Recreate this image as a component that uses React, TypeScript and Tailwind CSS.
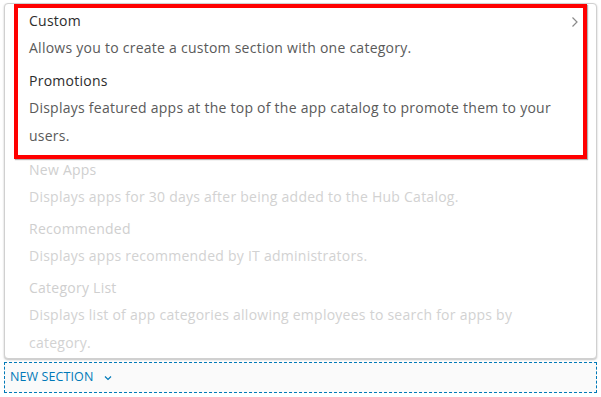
import React from 'react';

const ACTIVE = [
  { title: 'Custom', desc: 'Allows you to create a custom section with one category.', chevron: true },
  { title: 'Promotions', desc: 'Displays featured apps at the top of the app catalog to promote them to your users.' },
];

const DISABLED = [
  { title: 'New Apps', desc: 'Displays apps for 30 days after being added to the Hub Catalog.' },
  { title: 'Recommended', desc: 'Displays apps recommended by IT administrators.' },
  { title: 'Category List', desc: 'Displays list of app categories allowing employees to search for apps by category.' },
];

function Item({ title, desc, muted, chevron, last }: { title: string; desc: string; muted?: boolean; chevron?: boolean; last?: boolean }) {
  return (
    <div className={`relative ${muted || last ? 'pb-[5px]' : 'pb-[6px]'}`}>
      <div className={`h-[26px] leading-[26px] text-[14px] tracking-[0.25px] ${muted ? 'text-[#cfcfcf]' : 'text-[#2d2d2d]'}`}>{title}</div>
      <div className={`leading-[28px] text-[14px] tracking-[0.25px] ${muted ? 'text-[#d2d2d2]' : 'text-[#5a5a5a]'}`}>{desc}</div>
      {chevron && (
        <svg className="absolute right-[-18px] top-[8px]" width="8" height="12" viewBox="0 0 8 12" fill="none">
          <path d="M1.5 1.5 L6 6 L1.5 10.5" stroke="#8a8a8a" strokeWidth="1.2" />
        </svg>
      )}
    </div>
  );
}

export default function App() {
  return (
    <div className="w-[601px] h-[397px] bg-white pt-[3px] px-[4px]" style={{ fontFamily: '"Open Sans", "Noto Sans", sans-serif' }}>
      {/* dropdown panel */}
      <div className="h-[356px] rounded-[4px] border border-[#d0d0d0] bg-white shadow-[0_1px_2px_rgba(0,0,0,0.25)] overflow-hidden">
        {/* highlighted block */}
        <div className="relative z-10 mx-[9px] border-[4px] border-[#ff0000] pl-[11px] pr-[22px] shadow-[1px_1px_1px_rgba(0,0,0,0.3)]">
          {ACTIVE.map((it, i) => (
            <Item key={it.title} {...it} last={i === ACTIVE.length - 1} />
          ))}
        </div>
        <div className="-mt-[2px] pl-[24px] pr-[31px]">
          {DISABLED.map((it) => (
            <Item key={it.title} {...it} muted />
          ))}
        </div>
      </div>

      {/* new section bar */}
      <div className="mt-[3px] h-[31px] border border-dashed border-[#0079b8] bg-[#fafafa] flex items-center pl-[5px] gap-[11px]">
        <span className="text-[12.5px] tracking-[0.1px] text-[#0079b8]">NEW SECTION</span>
        <svg width="8" height="6" viewBox="0 0 8 6" fill="none">
          <path d="M1 1.5 L4 4.5 L7 1.5" stroke="#0079b8" strokeWidth="1.2" />
        </svg>
      </div>
    </div>
  );
}
